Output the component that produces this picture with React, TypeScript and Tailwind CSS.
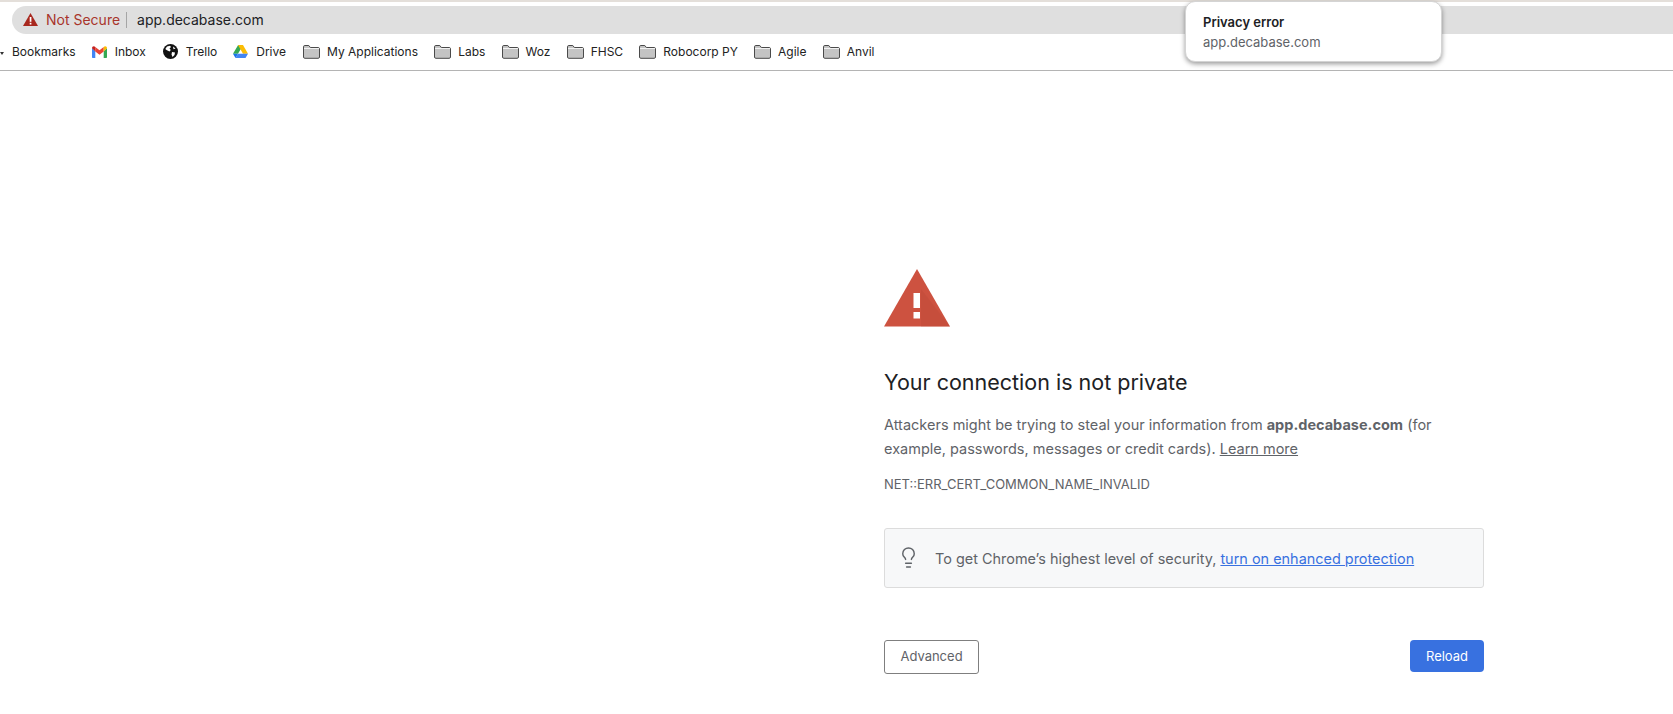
import { Lightbulb } from 'lucide-react'

const folders = ['My Applications', 'Labs', 'Woz', 'FHSC', 'Robocorp PY', 'Agile', 'Anvil']

function FolderIcon() {
  return (
    <svg width="17" height="14" viewBox="0 0 17 14" className="shrink-0">
      <path d="M.5 12V1.800C.5 1 1 .5 1.800.5h4l1.600 2h7.800c.8 0 1.300.5 1.300 1.300V12c0 .8-.5 1.300-1.300 1.300H1.800C1 13.300.5 12.800.5 12z" fill="#c4c4c4" stroke="#4a4a4a" />
      <path d="M1 3.500h15" stroke="#f2f2f2" />
    </svg>
  )
}

function GmailIcon() {
  return (
    <svg width="15" height="12" viewBox="0 0 15 12" className="shrink-0">
      <path d="M0 2v9c0 .6.400 1 1 1h2.300V5.200z" fill="#4285f4" />
      <path d="M15 2v9c0 .6-.4 1-1 1h-2.300V5.200z" fill="#34a853" />
      <path d="M3.300 5.500V1L7.500 4.300 11.700 1v4.500L7.500 8.700z" fill="#ea4335" />
      <path d="M0 2.200C0 .6 1.800-.4 3.300 1v4.500z" fill="#c5221f" />
      <path d="M15 2.200C15 .6 13.200-.4 11.700 1v4.500z" fill="#fbbc04" />
    </svg>
  )
}

function GlobeIcon() {
  return (
    <svg width="15" height="15" viewBox="0 0 15 15" className="shrink-0">
      <circle cx="7.500" cy="7.500" r="7.500" fill="#111" />
      <path d="M4 2.500l3-.8 1 1.300-1.500 1.500L7.800 6 6.500 7.500 3.500 6 2.300 5zM9 8l3 .5-.5 2.500-2 2-1-2.500zM10 2.500l2.500 2-2 .8z" fill="#fff" />
    </svg>
  )
}

function DriveIcon() {
  return (
    <svg width="15" height="13" viewBox="0 0 15 13" className="shrink-0">
      <path d="M5 0h5L5 8.500H0z" fill="#34a853" transform="translate(0 .2)" />
      <path d="M5 0h5l5 8.700h-5z" fill="#fbbc04" />
      <path d="M2.500 13L5 8.700h10L12.500 13z" fill="#4285f4" />
      <path d="M0 8.700h5L2.500 13z" fill="#1a73e8" />
    </svg>
  )
}

export default function App() {
  return (
    <div className="relative h-[714px] w-[1673px] overflow-hidden bg-white font-['Inter',sans-serif]">
      {/* Browser chrome */}
      <div className="h-[2px] bg-[#e4dfda]" />
      <div className="flex h-[69px] flex-col border-b border-[#b4b4b4] pt-1">
        <div className="ml-3 flex h-[28px] items-center rounded-l-full bg-[#dfdfdf] pl-[11px] text-sm">
          <svg width="15" height="13" viewBox="0 0 15 13" className="shrink-0">
            <path d="M7.500 0L15 13H0z" fill="#a8281e" />
            <rect x="6.700" y="4" width="1.700" height="4.800" fill="#fff" />
            <rect x="6.700" y="9.800" width="1.700" height="1.700" fill="#fff" />
          </svg>
          <span className="ml-[8px] text-[#a8352b]">Not Secure</span>
          <span className="ml-[6px] h-[16px] w-px bg-[#a5a5a5]" />
          <span className="ml-[10px] text-[#202124]">app.decabase.com</span>
        </div>

        <div className="relative flex h-[37px] items-center pl-3 text-xs text-[#222]">
          <span className="absolute left-0 top-[18px] h-0 w-0 border-x-[2px] border-t-[3px] border-x-transparent border-t-[#333]" />
          <span className="mr-[16px]">Bookmarks</span>
          <span className="mr-[17px] flex items-center gap-2">
            <GmailIcon />
            Inbox
          </span>
          <span className="mr-[16px] flex items-center gap-2">
            <GlobeIcon />
            Trello
          </span>
          <span className="mr-[17px] flex items-center gap-2">
            <DriveIcon />
            Drive
          </span>
          {folders.map((label) => (
            <span key={label} className="mr-[16.200px] flex items-center gap-[7px]">
              <FolderIcon />
              {label}
            </span>
          ))}
        </div>
      </div>

      {/* Tab hover card */}
      <div className="absolute left-[1185px] top-[1px] flex h-[61px] w-[257px] flex-col justify-center rounded-[10px] border border-[#d4d4d4] bg-white pl-[17px] shadow-[0_2px_5px_rgba(0,0,0,0.4)]">
        <div className="text-[13px] font-semibold leading-5 text-[#202124]">Privacy error</div>
        <div className="text-[13px] leading-5 text-[#5f6368]">app.decabase.com</div>
      </div>

      {/* Interstitial */}
      <main className="ml-[884px] w-[600px] pt-[198px]">
        <svg width="66" height="58" viewBox="0 0 66 58" className="block">
          <path d="M33 0l33 57.500H0z" fill="#cd5240" />
          <path d="M37 20l29 37.500H37z" fill="#b94836" opacity="0.35" />
          <rect x="29.500" y="24" width="6.500" height="15" fill="#fff" />
          <rect x="29.500" y="43" width="6.500" height="6.500" fill="#fff" />
        </svg>

        <h1 className="mt-[40px] text-[21.500px] font-normal leading-[30px] text-[#202124]">
          Your connection is not private
        </h1>
        <p className="mt-[16px] text-[14.500px] leading-6 text-[#5f6368]">
          Attackers might be trying to steal your information from{' '}
          <b className="font-bold">app.decabase.com</b> (for example, passwords, messages or credit cards).{' '}
          <a className="underline">Learn more</a>
        </p>
        <div className="mt-[13px] text-[13px] leading-5 text-[#5f6368]">NET::ERR_CERT_COMMON_NAME_INVALID</div>

        <div className="mt-[34px] flex h-[60px] items-center rounded-[3px] border border-[#dcdcdc] bg-[#f7f8f9] pb-px pl-3 text-[#5f6368]">
          <Lightbulb size={23} strokeWidth={1.5} className="shrink-0" />
          <span className="ml-[15px] translate-y-px text-[14.450px]">
            To get Chrome’s highest level of security,{' '}
            <a className="text-[#3871e0] underline">turn on enhanced protection</a>
          </span>
        </div>

        <div className="mt-[52px] flex items-start justify-between">
          <button className="h-[34px] w-[95px] rounded-[3px] border border-[#7f7f7f] bg-white text-[13px] text-[#5f6368]">
            Advanced
          </button>
          <button className="h-[32px] w-[74px] rounded-[4px] bg-[#3871e0] pt-px text-[13px] text-white">Reload</button>
        </div>
      </main>
    </div>
  )
}
